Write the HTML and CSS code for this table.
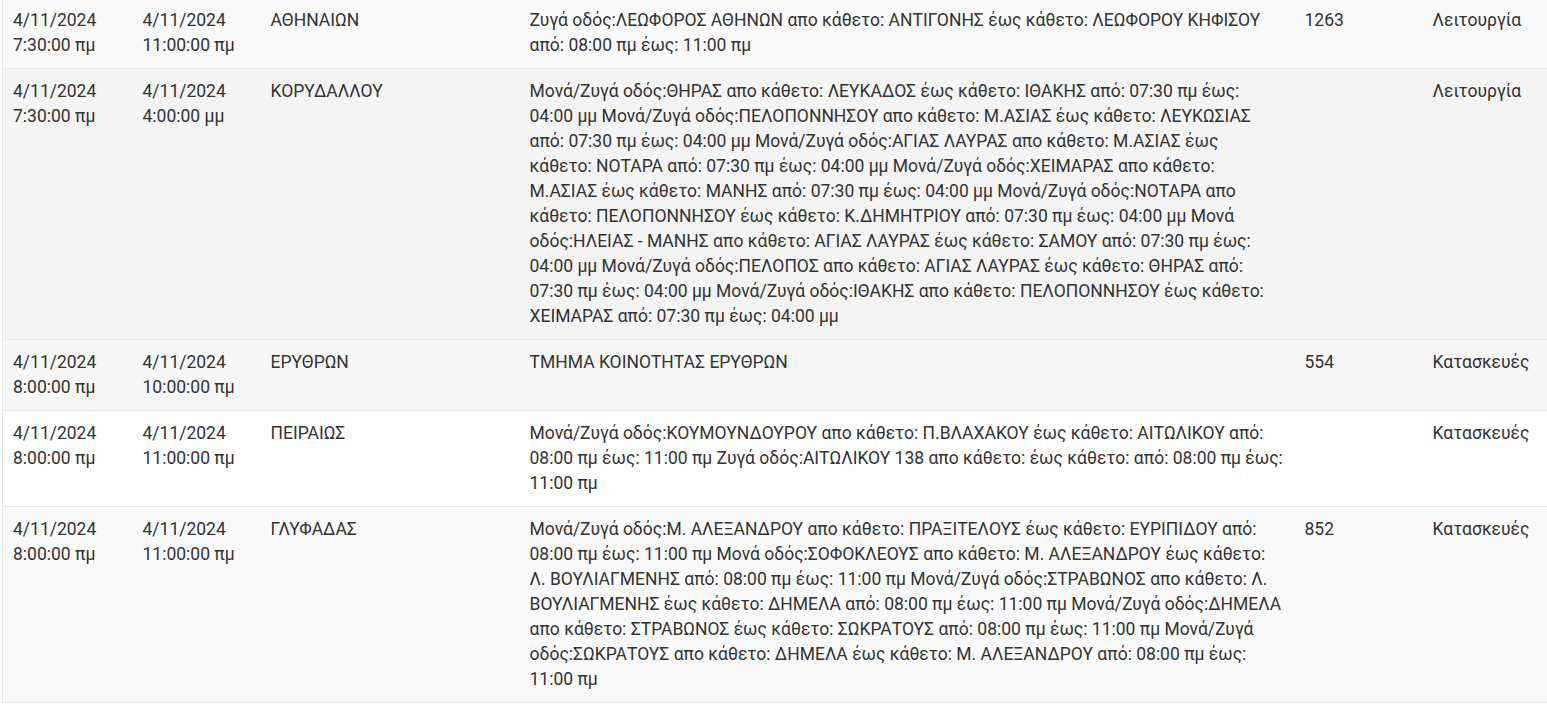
FILE: index.html
```html
<!DOCTYPE html>
<html lang="el">
<head>
<meta charset="utf-8">
<title>Έργα</title>
<link rel="stylesheet" href="styles.css">
</head>
<body>
<div class="wrap">
<table class="works">
<colgroup>
<col class="c-start"><col class="c-end"><col class="c-muni"><col class="c-desc"><col class="c-num"><col class="c-type">
</colgroup>
<tbody>
<tr class="r1">
<td>4/11/2024<br>7:30:00 πμ</td>
<td>4/11/2024<br>11:00:00 πμ</td>
<td>ΑΘΗΝΑΙΩΝ</td>
<td>Ζυγά οδός:ΛΕΩΦΟΡΟΣ ΑΘΗΝΩΝ απο κάθετο: ΑΝΤΙΓΟΝΗΣ έως κάθετο: ΛΕΩΦΟΡΟΥ ΚΗΦΙΣΟΥ από: 08:00 πμ έως: 11:00 πμ</td>
<td>1263</td>
<td>Λειτουργία</td>
</tr>
<tr class="r2">
<td>4/11/2024<br>7:30:00 πμ</td>
<td>4/11/2024<br>4:00:00 μμ</td>
<td>ΚΟΡΥΔΑΛΛΟΥ</td>
<td>Μονά/Ζυγά οδός:ΘΗΡΑΣ απο κάθετο: ΛΕΥΚΑΔΟΣ έως κάθετο: ΙΘΑΚΗΣ από: 07:30 πμ έως: 04:00 μμ Μονά/Ζυγά οδός:ΠΕΛΟΠΟΝΝΗΣΟΥ απο κάθετο: Μ.ΑΣΙΑΣ έως κάθετο: ΛΕΥΚΩΣΙΑΣ από: 07:30 πμ έως: 04:00 μμ Μονά/Ζυγά οδός:ΑΓΙΑΣ ΛΑΥΡΑΣ απο κάθετο: Μ.ΑΣΙΑΣ έως κάθετο: ΝΟΤΑΡΑ από: 07:30 πμ έως: 04:00 μμ Μονά/Ζυγά οδός:ΧΕΙΜΑΡΑΣ απο κάθετο: Μ.ΑΣΙΑΣ έως κάθετο: ΜΑΝΗΣ από: 07:30 πμ έως: 04:00 μμ Μονά/Ζυγά οδός:ΝΟΤΑΡΑ απο κάθετο: ΠΕΛΟΠΟΝΝΗΣΟΥ έως κάθετο: Κ.ΔΗΜΗΤΡΙΟΥ από: 07:30 πμ έως: 04:00 μμ Μονά οδός:ΗΛΕΙΑΣ - ΜΑΝΗΣ απο κάθετο: ΑΓΙΑΣ ΛΑΥΡΑΣ έως κάθετο: ΣΑΜΟΥ από: 07:30 πμ έως: 04:00 μμ Μονά/Ζυγά οδός:ΠΕΛΟΠΟΣ απο κάθετο: ΑΓΙΑΣ ΛΑΥΡΑΣ έως κάθετο: ΘΗΡΑΣ από: 07:30 πμ έως: 04:00 μμ Μονά/Ζυγά οδός:ΙΘΑΚΗΣ απο κάθετο: ΠΕΛΟΠΟΝΝΗΣΟΥ έως κάθετο: ΧΕΙΜΑΡΑΣ από: 07:30 πμ έως: 04:00 μμ</td>
<td></td>
<td>Λειτουργία</td>
</tr>
<tr class="r3">
<td>4/11/2024<br>8:00:00 πμ</td>
<td>4/11/2024<br>10:00:00 πμ</td>
<td>ΕΡΥΘΡΩΝ</td>
<td>ΤΜΗΜΑ ΚΟΙΝΟΤΗΤΑΣ ΕΡΥΘΡΩΝ</td>
<td>554</td>
<td>Κατασκευές</td>
</tr>
<tr class="r4">
<td>4/11/2024<br>8:00:00 πμ</td>
<td>4/11/2024<br>11:00:00 πμ</td>
<td>ΠΕΙΡΑΙΩΣ</td>
<td>Μονά/Ζυγά οδός:ΚΟΥΜΟΥΝΔΟΥΡΟΥ απο κάθετο: Π.ΒΛΑΧΑΚΟΥ έως κάθετο: ΑΙΤΩΛΙΚΟΥ από: 08:00 πμ έως: 11:00 πμ Ζυγά οδός:ΑΙΤΩΛΙΚΟΥ 138 απο κάθετο: έως κάθετο: από: 08:00 πμ έως: 11:00 πμ</td>
<td></td>
<td>Κατασκευές</td>
</tr>
<tr class="r5">
<td>4/11/2024<br>8:00:00 πμ</td>
<td>4/11/2024<br>11:00:00 πμ</td>
<td>ΓΛΥΦΑΔΑΣ</td>
<td>Μονά/Ζυγά οδός:Μ. ΑΛΕΞΑΝΔΡΟΥ απο κάθετο: ΠΡΑΞΙΤΕΛΟΥΣ έως κάθετο: ΕΥΡΙΠΙΔΟΥ από: 08:00 πμ έως: 11:00 πμ Μονά οδός:ΣΟΦΟΚΛΕΟΥΣ απο κάθετο: Μ. ΑΛΕΞΑΝΔΡΟΥ έως κάθετο: Λ. ΒΟΥΛΙΑΓΜΕΝΗΣ από: 08:00 πμ έως: 11:00 πμ Μονά/Ζυγά οδός:ΣΤΡΑΒΩΝΟΣ απο κάθετο: Λ. ΒΟΥΛΙΑΓΜΕΝΗΣ έως κάθετο: ΔΗΜΕΛΑ από: 08:00 πμ έως: 11:00 πμ Μονά/Ζυγά οδός:ΔΗΜΕΛΑ απο κάθετο: ΣΤΡΑΒΩΝΟΣ έως κάθετο: ΣΩΚΡΑΤΟΥΣ από: 08:00 πμ έως: 11:00 πμ Μονά/Ζυγά οδός:ΣΩΚΡΑΤΟΥΣ απο κάθετο: ΔΗΜΕΛΑ έως κάθετο: Μ. ΑΛΕΞΑΝΔΡΟΥ από: 08:00 πμ έως: 11:00 πμ</td>
<td>852</td>
<td>Κατασκευές</td>
</tr>
</tbody>
</table>
</div>
</body>
</html>
```

FILE: styles.css
```css
html, body {
  margin: 0;
  padding: 0;
  background: #ffffff;
  overflow: hidden;
}
body {
  font-family: Roboto, "Noto Sans", "Liberation Sans", sans-serif;
  font-size: 17.5px;
  line-height: 25px;
  color: #333333;
}
.wrap {
  padding-left: 2px;
  margin-top: -3px;
}
.works {
  border-collapse: collapse;
  table-layout: fixed;
  width: 1560px;
  border-left: 1px solid #e6e6e6;
  border-top: 1px solid #ebebeb;
}
.c-start { width: 130px; }
.c-end { width: 128px; }
.c-muni { width: 259px; }
.c-desc { width: 775px; }
.c-num { width: 128px; }
.c-type { width: 140px; }
.works td {
  vertical-align: top;
  padding: 10px 10px 10px 10px;
  border-bottom: 1px solid #ebebeb;
  text-align: left;
}
.r1 { background: #fafafa; }
.r2 { background: #f4f4f4; }
.r3 { background: #f7f7f7; }
.r4 { background: #ffffff; }
.r5 { background: #fafafa; }
```
